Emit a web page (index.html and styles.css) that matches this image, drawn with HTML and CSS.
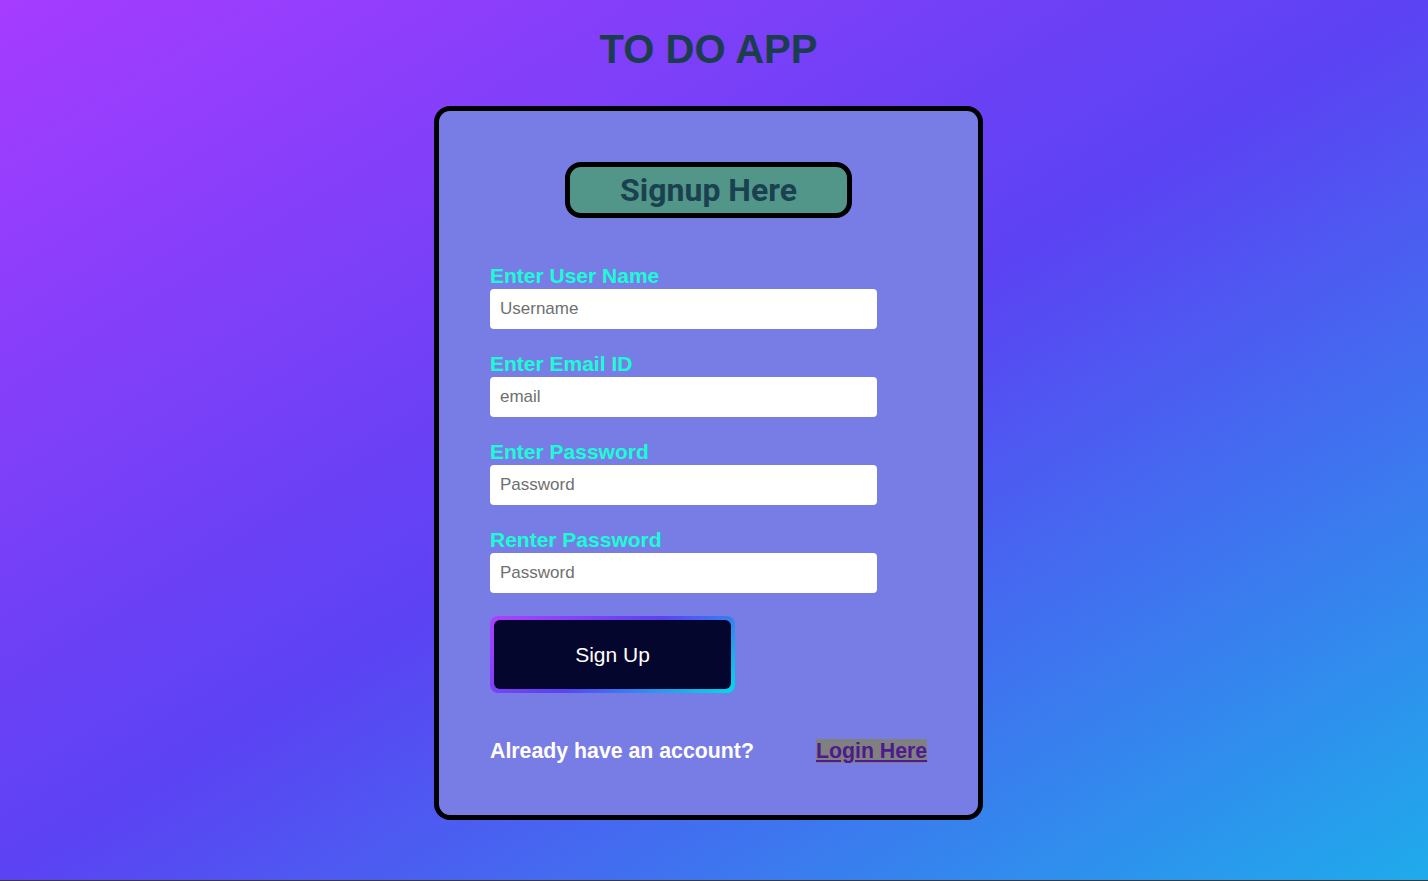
FILE: index.html
```html
<!DOCTYPE html>
<html lang="en">
<head>
<meta charset="utf-8">
<title>TO DO APP</title>
<link rel="stylesheet" href="styles.css">
</head>
<body>
<main class="page">
  <h1 class="app-title">TO DO APP</h1>
  <section class="card">
    <h2 class="card-title">Signup Here</h2>
    <form class="form">
      <label class="field">
        <span class="field-label">Enter User Name</span>
        <input class="field-input" type="text" placeholder="Username">
      </label>
      <label class="field">
        <span class="field-label">Enter Email ID</span>
        <input class="field-input" type="email" placeholder="email">
      </label>
      <label class="field">
        <span class="field-label">Enter Password</span>
        <input class="field-input" type="password" placeholder="Password">
      </label>
      <label class="field">
        <span class="field-label">Renter Password</span>
        <input class="field-input" type="password" placeholder="Password">
      </label>
      <button class="btn" type="button"><span class="btn-inner">Sign Up</span></button>
      <div class="footer">
        <span class="footer-text">Already have an account?</span>
        <a class="footer-link" href="#">Login Here</a>
      </div>
    </form>
  </section>
</main>
</body>
</html>
```

FILE: styles.css
```css
html {
  margin: 0;
  background: #3a3a3a;
}
body {
  margin: 0;
  height: 880px;
  background: linear-gradient(to bottom right, #a63cff 0%, #5b42f3 50%, #1fabeb 100%);
  font-family: "Liberation Sans", Arial, sans-serif;
  overflow: hidden;
}
.page {
  display: flex;
  flex-direction: column;
  align-items: center;
  padding-top: 26px;
  padding-right: 11px;
}
.app-title {
  margin: 0;
  font-family: "Liberation Sans", Arial, sans-serif;
  font-size: 40px;
  line-height: 46px;
  font-weight: 700;
  color: #1b3e4e;
}
.card {
  margin-top: 34px;
  width: 549px;
  height: 714px;
  box-sizing: border-box;
  border: 5px solid #000;
  border-radius: 16px;
  background: #787de6;
  display: flex;
  flex-direction: column;
  align-items: center;
  padding-top: 51px;
}
.card-title {
  margin: 0;
  width: 287px;
  height: 56px;
  box-sizing: border-box;
  border: 5px solid #000;
  border-radius: 16px;
  background: #52968a;
  color: #1a4150;
  font-family: Roboto, "Liberation Sans", sans-serif;
  font-size: 32px;
  font-weight: 700;
  display: flex;
  align-items: center;
  justify-content: center;
}
.form {
  align-self: stretch;
  padding: 47px 51px 0;
  display: flex;
  flex-direction: column;
}
.field {
  display: flex;
  flex-direction: column;
  margin-bottom: 24px;
}
.field-label {
  font-size: 21px;
  font-weight: 700;
  line-height: 22px;
  padding-bottom: 2px;
  color: #1cfcd4;
}
.field-input {
  width: 387px;
  height: 40px;
  box-sizing: border-box;
  border: none;
  border-radius: 4px;
  background: #fff;
  padding: 0 10px;
  font-family: "Liberation Sans", Arial, sans-serif;
  font-size: 17px;
  color: #222;
  outline: none;
}
.field-input::placeholder {
  color: #6f6f6f;
}
.btn {
  align-self: flex-start;
  margin-top: -1px;
  width: 245px;
  height: 77px;
  padding: 4px;
  border: none;
  border-radius: 8px;
  background-image: linear-gradient(144deg, #af40ff, #5b42f3 50%, #00ddeb);
  cursor: pointer;
  display: flex;
}
.btn-inner {
  flex: 1;
  border-radius: 6px;
  background: #05062d;
  color: #fff;
  font-family: "Liberation Sans", Arial, sans-serif;
  font-size: 21px;
  display: flex;
  align-items: center;
  justify-content: center;
}
.footer {
  margin-top: 46px;
  display: flex;
  align-items: center;
  gap: 62px;
  font-size: 21.3px;
  font-weight: 700;
  line-height: 24px;
  white-space: nowrap;
}
.footer-text {
  color: #fff;
  flex-shrink: 0;
}
.footer-link {
  flex-shrink: 0;
  color: #4d1a8f;
  background: #808080;
  text-decoration: underline;
}
```
